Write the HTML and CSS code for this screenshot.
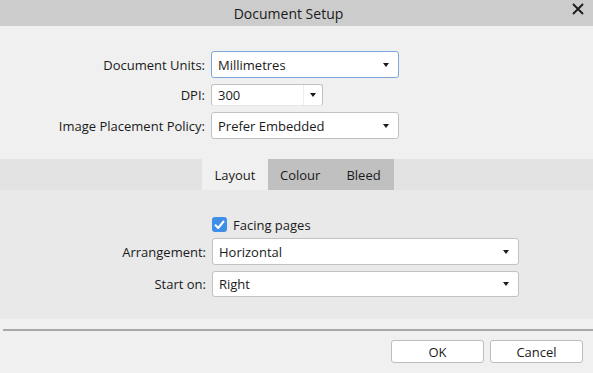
FILE: index.html
```html
<!DOCTYPE html>
<html>
<head>
<meta charset="utf-8">
<link rel="stylesheet" href="styles.css">
</head>
<body>
<div class="dialog">
  <div class="titlebar">
    <span class="title">Document Setup</span>
    <span class="close">
      <svg width="12" height="12" viewBox="0 0 12 12"><path d="M1 1 L11 11 M11 1 L1 11" stroke="#1a1a1a" stroke-width="1.8" fill="none"/></svg>
    </span>
  </div>
  <div class="top">
    <div class="form top-form">
      <label class="lbl">Document Units:</label>
      <div class="select focus wide"><span>Millimetres</span><i class="arrow"></i></div>
      <label class="lbl">DPI:</label>
      <div class="select dpi"><span>300</span><span class="drop"><i class="arrow"></i></span></div>
      <label class="lbl">Image Placement Policy:</label>
      <div class="select wide"><span>Prefer Embedded</span><i class="arrow"></i></div>
    </div>
  </div>
  <div class="tabbar">
    <div class="tab active">Layout</div>
    <div class="tab">Colour</div>
    <div class="tab">Bleed</div>
  </div>
  <div class="panel">
    <div class="form layout-form">
      <span></span>
      <div class="check-row">
        <span class="checkbox"><svg width="11" height="10" viewBox="0 0 11 10"><path d="M1.5 5.2 L4.2 8 L9.5 1.5" stroke="#fff" stroke-width="2" fill="none" stroke-linecap="round" stroke-linejoin="round"/></svg></span>
        <span>Facing pages</span>
      </div>
      <label class="lbl">Arrangement:</label>
      <div class="select long"><span>Horizontal</span><i class="arrow"></i></div>
      <label class="lbl">Start on:</label>
      <div class="select long"><span>Right</span><i class="arrow"></i></div>
    </div>
  </div>
  <div class="footer">
    <div class="separator"></div>
    <div class="buttons">
      <button class="btn">OK</button>
      <button class="btn">Cancel</button>
    </div>
  </div>
</div>
</body>
</html>
```
FILE: styles.css
```css
* { box-sizing: border-box; }
html, body { margin: 0; padding: 0; }
body {
  width: 593px;
  height: 373px;
  overflow: hidden;
  background: #f0f0f0;
  font-family: "Open Sans", "Noto Sans", sans-serif;
  font-size: 13px;
  color: #1a1a1a;
}
.dialog { display: flex; flex-direction: column; height: 373px; }
.titlebar {
  height: 26px;
  background: #cccccc;
  display: flex;
  align-items: center;
  justify-content: center;
  position: relative;
}
.title { font-size: 14px; margin-left: -16px; }
.close {
  position: absolute;
  right: 9px;
  top: 3px;
  width: 12px;
  height: 12px;
}
.close svg { display: block; }
.top { height: 133px; padding-top: 25px; }
.form {
  display: grid;
  align-items: center;
}
.top-form {
  grid-template-columns: 205px 188px;
  grid-template-rows: 27px 22px 27px;
  column-gap: 6px;
  row-gap: 6px;
}
.lbl { text-align: right; white-space: nowrap; }
.select {
  background: #fff;
  border: 1px solid #c2c2c2;
  border-radius: 3px;
  height: 100%;
  display: flex;
  align-items: center;
  justify-content: space-between;
  padding: 0 9px 0 6px;
}
.select.focus { border-color: #7ea6d8; }
.select.dpi { width: 112px; padding-right: 0; border-bottom-color: #e6e6e6; }
.drop {
  width: 19px;
  height: 100%;
  border-left: 1px solid #ececec;
  display: flex;
  align-items: center;
  justify-content: center;
}
.arrow {
  width: 0;
  height: 0;
  border-left: 3.5px solid transparent;
  border-right: 3.5px solid transparent;
  border-top: 4px solid #1a1a1a;
}
.tabbar {
  height: 31px;
  background: #e3e3e3;
  display: flex;
  padding-left: 202px;
}
.tab {
  height: 100%;
  display: flex;
  align-items: center;
  background: #c0c0c0;
  padding: 0 12px;
}
.tab.active { background: #f0f0f0; width: 66px; justify-content: center; padding: 0; }
.tab:nth-child(2) { padding-left: 12px; padding-right: 14px; }
.tab:nth-child(3) { padding-left: 12px; padding-right: 13px; }
.panel {
  height: 129px;
  background: #e9e9e9;
  padding-top: 27px;
}
.layout-form {
  grid-template-columns: 206px 307px;
  grid-template-rows: 15px 27px 26px;
  column-gap: 6px;
  row-gap: 6px;
}
.check-row { display: flex; align-items: center; gap: 6px; height: 15px; }
.checkbox {
  width: 15px;
  height: 15px;
  border-radius: 3px;
  background: #3f8ee8;
  display: flex;
  align-items: center;
  justify-content: center;
}
.footer {
  flex: 1;
  background: #f0f0f0;
  padding-top: 10px;
}
.separator {
  height: 2px;
  background: #a8a8a8;
  margin-left: 3px;
}
.buttons {
  display: flex;
  justify-content: flex-end;
  gap: 6px;
  padding: 9px 10px 0 0;
}
.btn {
  width: 93px;
  height: 23px;
  background: #fff;
  border: 1px solid #bdbdbd;
  border-radius: 3px;
  font-family: inherit;
  font-size: 13px;
  color: #1a1a1a;
  padding: 0;
}
```
